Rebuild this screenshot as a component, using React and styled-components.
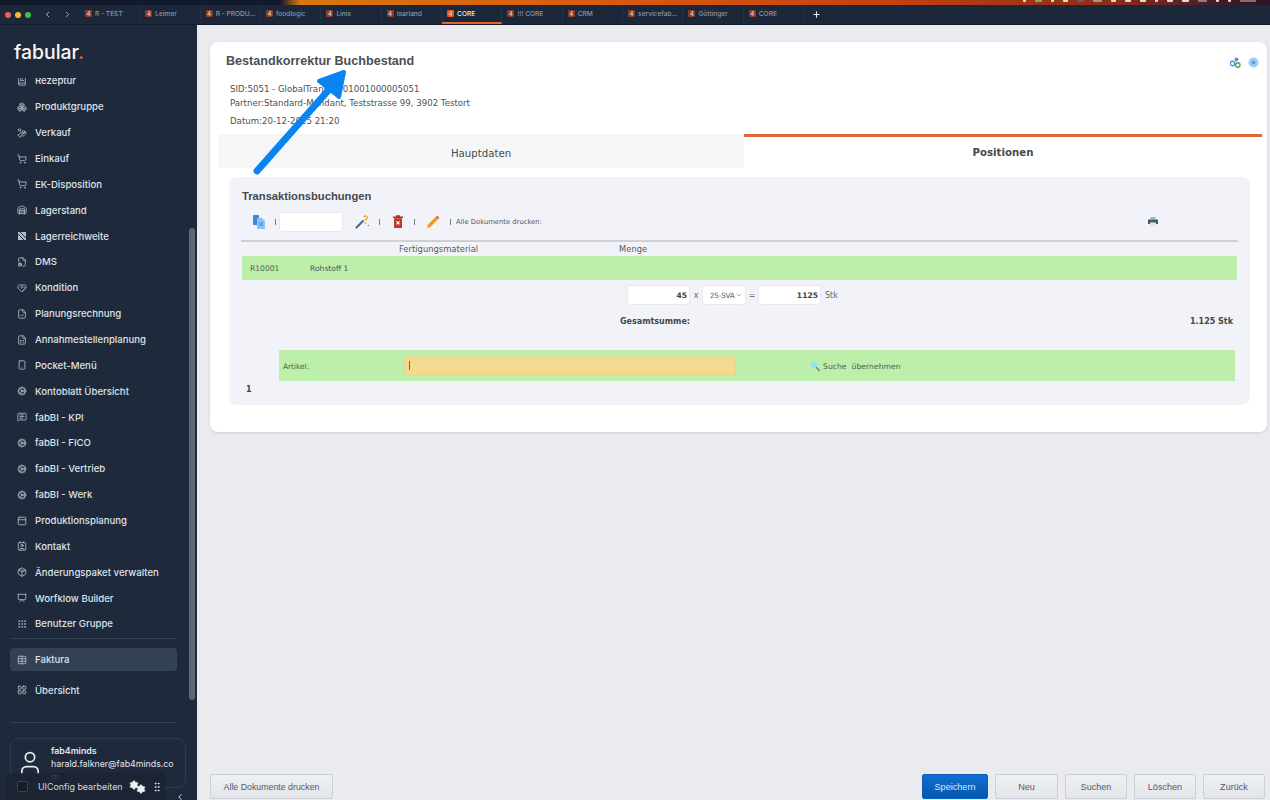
import styled, { createGlobalStyle } from "styled-components";
import {
  BookText, Boxes, HandCoins, ShoppingCart, Warehouse, FileCog, HeartHandshake,
  FileCheck, FileSpreadsheet, Smartphone, Cog, MessageSquareText, PanelTop, Contact,
  Package, Presentation, Grip, Table, LayoutGrid, User, ChevronLeft, ChevronRight, ChevronDown,
  Settings, GripVertical, Plus,
} from "lucide-react";

const GlobalStyle = createGlobalStyle`
  html, body {
    margin: 0;
    padding: 0;
    background: #e9ebef;
  }
  * {
    box-sizing: border-box;
  }
`;

const Page = styled.div`
  position: relative;
  width: 1270px;
  height: 800px;
  overflow: hidden;
  display: flex;
  flex-direction: column;
  font-family: "DejaVu Sans", sans-serif;
`;

const MenuBar = styled.div`
  height: 5px;
  flex: none;
  display: flex;
  justify-content: flex-end;
  gap: 9px;
  padding-right: 14px;
  background: linear-gradient(90deg, #101a2c 0, #101a2c 280px, #d8760f 300px, #d9590f 620px, #c2410f 900px, #8a2b18 1120px, #3a1a2b 1230px, #2a1626 1270px);
`;

const MenuGlyph = styled.span`
  width: ${({ $w }) => $w || 4}px;
  height: 2px;
  background: ${({ $c }) => $c || "#e6d8d4"};
  border-radius: 0 0 1px 1px;
`;

const TabBar = styled.div`
  height: 20px;
  flex: none;
  display: flex;
  align-items: center;
  background: #1c2839;
  border-bottom: 1px solid #111a28;
`;

const WindowControls = styled.div`
  width: 80px;
  flex: none;
  display: flex;
  align-items: center;
  padding-left: 5px;
  gap: 4px;
  color: #c5cbd4;
`;

const Light = styled.span`
  width: 6px;
  height: 6px;
  border-radius: 50%;
  background: ${({ $c }) => $c};
`;

const NavArrows = styled.div`
  display: flex;
  gap: 11px;
  margin-left: 8px;
`;

const Tab = styled.div`
  width: 60.35px;
  height: 19px;
  flex: none;
  display: flex;
  align-items: center;
  gap: 3px;
  padding-left: 5px;
  font: 500 6.6px Inter, sans-serif;
  color: ${({ $active }) => ($active ? "#e4e8ee" : "#8d96a3")};
  border-right: 1px solid #253245;
  border-bottom: 2px solid ${({ $active }) => ($active ? "#e8622c" : "transparent")};
`;

const TabIcon = styled.span`
  width: 7px;
  height: 7px;
  border-radius: 1px;
  display: grid;
  place-items: center;
  font: 700 5.5px Inter, sans-serif;
  color: #d8c0b6;
  background: ${({ $active }) => ($active ? "#ea5a1c" : "#8a3a2a")};
`;

const NewTab = styled.div`
  margin-left: 7.5px;
  display: flex;
  color: #e4e8ee;
`;

const Body = styled.div`
  flex: 1;
  min-height: 0;
  display: flex;
`;

const Sidebar = styled.aside`
  position: relative;
  width: 197px;
  flex: none;
  display: flex;
  flex-direction: column;
  background: #1e293b;
  font-family: Inter, sans-serif;
`;

const Logo = styled.div`
  height: 53px;
  flex: none;
  padding: 13px 0 0 14px;
  font: 500 19.4px/28px Inter, sans-serif;
  color: #f6f7f8;
  span {
    color: #e8622c;
  }
`;

const Nav = styled.nav`
  height: 558px;
  flex: none;
  overflow: hidden;
`;

const NavList = styled.div`
  margin-top: -10px;
`;

const NavItem = styled.div`
  height: ${({ $h }) => $h || 25.86}px;
  width: 167px;
  margin: ${({ $mt }) => $mt || 0}px 0 0 10px;
  padding-left: 7px;
  display: flex;
  align-items: center;
  gap: 8px;
  font-size: 9.6px;
  font-weight: 500;
  color: #dfe3ea;
  border-radius: 4px;
  background: ${({ $active }) => ($active ? "#334155" : "transparent")};
  svg {
    flex: none;
    color: #b4bcc8;
  }
`;

const Divider = styled.div`
  width: 167px;
  height: 1px;
  margin: ${({ $m }) => $m};
  background: #334155;
`;

const UserCard = styled.div`
  width: 176px;
  height: 50px;
  margin: 15px 0 0 10px;
  padding: 5px 0 0 5px;
  display: flex;
  gap: 7px;
  border: 1px solid #2e3a4d;
  border-radius: 8px;
  overflow: hidden;
  color: #e2e6ec;
  font-size: 8.8px;
  line-height: 13px;
  svg {
    flex: none;
    margin-top: 5px;
    color: #e8ebef;
  }
`;

const UserText = styled.div`
  width: 124px;
  word-break: break-all;
  strong {
    display: block;
    font-weight: 600;
  }
  span {
    display: block;
  }
`;

const ScrollThumb = styled.div`
  position: absolute;
  left: 189px;
  top: 203px;
  width: 6px;
  height: 472px;
  border-radius: 3px;
  background: #5d6675;
`;

const ConfigBar = styled.div`
  position: absolute;
  left: 5px;
  bottom: 0;
  width: 160px;
  height: 27px;
  display: flex;
  align-items: center;
  padding-left: 12px;
  border-radius: 4px 4px 0 0;
  background: rgba(28, 35, 49, 0.86);
  color: #d5d9df;
  font-size: 8.9px;
`;

const ConfigCheck = styled.span`
  width: 11px;
  height: 11px;
  flex: none;
  margin-right: 10px;
  border: 1px solid #3a4250;
  border-radius: 2px;
  background: #171c27;
`;

const ConfigLabel = styled.span`
  white-space: nowrap;
`;

const GearPair = styled.span`
  position: relative;
  width: 17px;
  height: 14px;
  flex: none;
  margin-left: 6px;
  color: #eef0f3;
  svg {
    position: absolute;
  }
  svg:first-child {
    left: 0;
    top: 0;
  }
  svg:last-child {
    right: 0;
    bottom: 0;
  }
`;

const ConfigGrip = styled(GripVertical)`
  flex: none;
  margin-left: 5px;
`;

const CollapseHandle = styled.span`
  position: absolute;
  left: 175px;
  bottom: -6px;
  color: #cfd4db;
`;

const Main = styled.main`
  flex: 1;
  min-width: 0;
  display: flex;
  flex-direction: column;
  padding: 17px 3px 0 13px;
  background: #e9ebef;
`;

const Card = styled.section`
  height: 390px;
  flex: none;
  padding: 10px 5px 0 8px;
  border-radius: 8px;
  background: #fff;
  box-shadow: 0 1px 3px rgba(40, 50, 70, 0.14);
`;

const CardHead = styled.div`
  display: flex;
  justify-content: space-between;
  padding-left: 8px;
`;

const Title = styled.h1`
  margin: 0;
  font: 700 12.6px/18px "Liberation Sans", sans-serif;
  color: #4a4f55;
`;

const HeadIcons = styled.div`
  display: flex;
  gap: 7px;
  padding: 5px 3px 0 0;
`;

const Meta = styled.div`
  margin: 11.5px 0 0 12px;
  font-size: 8.6px;
  color: #4b5056;
  p {
    margin: 0;
    height: 14px;
    line-height: 14px;
  }
  p:last-child {
    margin-top: 4px;
  }
`;

const TabRow = styled.div`
  display: flex;
  margin-top: 6.5px;
  height: 34px;
`;

const PanelTab = styled.div`
  flex: ${({ $grow }) => $grow} 0 0;
  display: flex;
  justify-content: center;
  align-items: ${({ $active }) => ($active ? "flex-start" : "center")};
  padding-top: ${({ $active }) => ($active ? "10px" : "6px")};
  font-size: 10.2px;
  line-height: 12px;
  font-weight: ${({ $active }) => ($active ? 700 : 400)};
  color: #444a50;
  background: ${({ $active }) => ($active ? "#fff" : "#f5f6f8")};
  border-top: ${({ $active }) => ($active ? "3px solid #e0673a" : "0")};
`;

const Panel = styled.div`
  height: 228px;
  margin: 9px 12px 0 11px;
  padding: 12px 12px 0 12px;
  border-radius: 8px;
  background: #f2f3f8;
`;

const PanelTitle = styled.h2`
  margin: 0;
  padding-left: 1px;
  font: 700 11.2px/15px "Liberation Sans", sans-serif;
  color: #44494f;
`;

const Toolbar = styled.div`
  height: 27px;
  margin-top: 4px;
  display: flex;
  align-items: center;
  padding-left: 11px;
  font-size: 6.8px;
  color: #50565c;
`;

const ToolSep = styled.span`
  width: 1px;
  height: 6px;
  flex: none;
  margin: ${({ $m }) => $m};
  background: #777c82;
`;

const ToolGap = styled.span`
  width: 12px;
  flex: none;
`;

const Field = styled.div`
  width: ${({ $w }) => $w}px;
  height: 20px;
  flex: none;
  display: flex;
  align-items: center;
  justify-content: flex-end;
  padding-right: 2px;
  border: 1px solid #e8e9ee;
  border-radius: 3px;
  background: #fff;
  font-size: 7.6px;
  font-weight: 700;
  color: #3d4248;
`;

const PrintSpot = styled.span`
  margin-left: auto;
  margin-right: 80px;
  display: flex;
`;

const Rule = styled.div`
  height: 2px;
  margin-top: 5px;
  background: #cfd0d4;
`;

const ColumnHead = styled.div`
  height: 14px;
  display: grid;
  grid-template-columns: 158px 220px 1fr;
  align-items: center;
  font-size: 8.4px;
  color: #55595f;
`;

const GreenRow = styled.div`
  height: ${({ $h }) => $h}px;
  display: flex;
  align-items: center;
  background: #bcefa9;
  color: #53595a;
  font-size: 7.6px;
`;

const ItemRow = styled(GreenRow)`
  margin: 0 1px;
`;

const ItemNo = styled.span`
  width: 68px;
  padding-left: 8px;
`;

const QtyRow = styled.div`
  height: 20px;
  margin-top: 5px;
  display: flex;
  align-items: center;
  padding-left: 386px;
  font-size: 8px;
  color: #656a70;
`;

const Op = styled.span`
  width: 12px;
  text-align: center;
`;

const UnitSelect = styled(Field)`
  justify-content: space-between;
  padding: 0 2px 0 7px;
  font-weight: 400;
  font-size: 7.2px;
  letter-spacing: -0.2px;
  white-space: nowrap;
  color: #595e64;
  svg {
    flex: none;
    color: #777;
  }
`;

const Unit = styled.span`
  margin-left: 4px;
`;

const TotalRow = styled.div`
  height: 14px;
  margin-top: 9px;
  display: flex;
  justify-content: space-between;
  align-items: center;
  padding: 0 5px 0 379px;
  font-size: 8px;
  font-weight: 700;
  color: #43484e;
`;

const EntryRow = styled(GreenRow)`
  margin: 22px 3px 0 38px;
  padding-left: 4px;
`;

const EntryLabel = styled.span`
  width: 121px;
  padding-top: 1px;
  font-size: 7.4px;
`;

const EntryInput = styled.div`
  width: 332px;
  height: 20px;
  flex: none;
  display: flex;
  align-items: center;
  padding-left: 4px;
  border: 1px solid #e3d59b;
  border-radius: 2px;
  background: #f3da91;
  i {
    width: 1px;
    height: 9px;
    background: #77684a;
  }
`;

const EntryActions = styled.div`
  margin-left: 74px;
  padding-top: 1px;
  display: flex;
  align-items: center;
  font-size: 7.7px;
  svg {
    margin-right: 3px;
  }
  span + span {
    margin-left: 5px;
  }
`;

const PageNo = styled.div`
  margin: 3px 0 0 5px;
  font-size: 8px;
  line-height: 11px;
  font-weight: 700;
  color: #3d4248;
`;

const Footer = styled.footer`
  margin-top: auto;
  height: 26px;
  padding-right: 2px;
  display: flex;
  align-items: flex-start;
  gap: 7px;
`;

const Button = styled.button`
  width: ${({ $w }) => $w}px;
  height: 25px;
  flex: none;
  padding: 0;
  font: 400 9.1px "Liberation Sans", sans-serif;
  border-radius: 2px;
  border: 1px solid ${({ $primary }) => ($primary ? "#0b62bd" : "#cbd0d7")};
  color: ${({ $primary }) => ($primary ? "#dbe9f8" : "#555b62")};
  background: ${({ $primary }) =>
    $primary ? "linear-gradient(#0f6fd2, #0457ad)" : "linear-gradient(#eff0f3, #e3e5e9)"};
`;

const PrintAllButton = styled(Button)`
  font-size: 8.8px;
`;

const FooterSpacer = styled.div`
  flex: 1;
`;

const Annotation = styled.svg`
  position: absolute;
  left: 0;
  top: 0;
  pointer-events: none;
`;

const tabs = ["R - TEST", "Leimer", "R - PRODU...", "foodlogic", "Linis", "Isarland", "CORE", "!!! CORE", "CRM", "servicefab...", "Göttinger", "CORE"];

function ReachIcon({ size }) {
  return (
    <svg width={size} height={size} viewBox="0 0 10 10">
      <path d="M1 1h8v8H1z" fill="#b4bcc8" />
      <path d="M1 3 7 9M3 1l6 6" stroke="#1e293b" strokeWidth="1" />
    </svg>
  );
}

const navItems = [
  ["Rezeptur", BookText], ["Produktgruppe", Boxes], ["Verkauf", HandCoins], ["Einkauf", ShoppingCart],
  ["EK-Disposition", ShoppingCart], ["Lagerstand", Warehouse], ["Lagerreichweite", ReachIcon], ["DMS", FileCog],
  ["Kondition", HeartHandshake], ["Planungsrechnung", FileCheck], ["Annahmestellenplanung", FileSpreadsheet],
  ["Pocket-Menü", Smartphone], ["Kontoblatt Übersicht", Cog], ["fabBI - KPI", MessageSquareText],
  ["fabBI - FICO", Cog], ["fabBI - Vertrieb", Cog], ["fabBI - Werk", Cog],
  ["Produktionsplanung", PanelTop], ["Kontakt", Contact], ["Änderungspaket verwalten", Package],
  ["Worfklow Builder", Presentation], ["Benutzer Gruppe", Grip],
];

function ShareIcon() {
  return (
    <svg width="11" height="11" viewBox="0 0 11 11">
      <circle cx="6.5" cy="2.5" r="2" fill="#7d7fe0" />
      <circle cx="2.5" cy="6.5" r="2.2" fill="none" stroke="#3f97f0" strokeWidth="1.4" />
      <circle cx="7.8" cy="8" r="2.2" fill="none" stroke="#45b04a" strokeWidth="1.4" />
    </svg>
  );
}

function GlobeIcon() {
  return (
    <svg width="11" height="11" viewBox="0 0 11 11">
      <circle cx="5.5" cy="5.5" r="5" fill="#9ccdfb" />
      <circle cx="5.5" cy="5.5" r="2" fill="#5aa5f2" />
    </svg>
  );
}

function CopyDocIcon() {
  return (
    <svg width="14" height="15" viewBox="0 0 14 15">
      <path d="M1 1h6v10H1z" fill="#3a8bdc" />
      <path d="M5 4h5l3 3v8H5z" fill="#8cc3f2" />
      <path d="M7 9h4M7 11h4" stroke="#3a8bdc" strokeWidth="1" />
    </svg>
  );
}

function WandIcon() {
  return (
    <svg width="15" height="15" viewBox="0 0 15 15">
      <path d="M1.5 13.5 8 7" stroke="#46657e" strokeWidth="2" strokeLinecap="round" />
      <path d="M8.5 3.2C9 1.4 12.3 1.5 12.3 3.5c0 1.6-2 1.6-2 3.2" fill="none" stroke="#eeb02e" strokeWidth="1.5" />
      <circle cx="10.5" cy="9" r="0.9" fill="#eeb02e" />
      <circle cx="13.4" cy="11.6" r="0.8" fill="#ea7a2c" />
    </svg>
  );
}

function TrashIcon() {
  return (
    <svg width="10" height="13" viewBox="0 0 10 13">
      <path d="M0 1.5h10v1.6H0zM3 .3h4v1.4H3z" fill="#a8352c" />
      <path d="M1 3.2h8V13H1z" fill="#c2372e" />
      <path d="M3.5 6.4l3 3M6.5 6.4l-3 3" stroke="#fff" strokeWidth="1.2" />
    </svg>
  );
}

function PencilIcon() {
  return (
    <svg width="14" height="14" viewBox="0 0 14 14">
      <path d="M1 13 2 9.5 10.5 1.2 12.8 3.4 4.3 12z" fill="#f29a26" />
      <path d="M10.5 1.2 12.8 3.4" stroke="#d76a35" strokeWidth="1.6" />
    </svg>
  );
}

function PrintIcon() {
  return (
    <svg width="10" height="9" viewBox="0 0 10 9">
      <path d="M2.5 0h5v2.5h-5z" fill="#9eb4c4" />
      <path d="M0 2.5h10V7H0z" fill="#44596b" />
      <path d="M2 5.5h6V9H2z" fill="#dfe6ea" />
    </svg>
  );
}

function LensIcon() {
  return (
    <svg width="10" height="10" viewBox="0 0 10 10">
      <circle cx="4" cy="4" r="3.4" fill="#8fe4f4" />
      <path d="M6.5 6.5 9.4 9.4" stroke="#4a8fb8" strokeWidth="1.4" strokeLinecap="round" />
    </svg>
  );
}

export default function App() {
  return (
    <Page>
      <GlobalStyle />
      <MenuBar>
        <MenuGlyph $w={3} />
        <MenuGlyph $w={7} $c="#7fb04a" />
        <MenuGlyph $w={3} />
        <MenuGlyph $w={5} />
        <MenuGlyph $w={7} $c="#6a5f60" />
        <MenuGlyph $w={9} $c="#a8938f" />
        <MenuGlyph $w={5} />
        <MenuGlyph $w={6} />
        <MenuGlyph $w={6} />
        <MenuGlyph $w={3} />
        <MenuGlyph $w={6} />
        <MenuGlyph $w={7} />
        <MenuGlyph $w={9} $c="#8d7f85" />
        <MenuGlyph $w={3} />
        <MenuGlyph $w={3} />
        <MenuGlyph $w={16} $c="#8e6d70" />
      </MenuBar>
      <TabBar>
        <WindowControls>
          <Light $c="#ee5f57" />
          <Light $c="#f4bd30" />
          <Light $c="#39c548" />
          <NavArrows>
            <ChevronLeft size={9} strokeWidth={2.4} />
            <ChevronRight size={9} strokeWidth={2} />
          </NavArrows>
        </WindowControls>
        {tabs.map((name, i) => (
          <Tab key={i} $active={i === 6}>
            <TabIcon $active={i === 6}>4</TabIcon>
            {name}
          </Tab>
        ))}
        <NewTab>
          <Plus size={9} strokeWidth={3} />
        </NewTab>
      </TabBar>
      <Body>
        <Sidebar>
          <Logo>fabular<span>.</span></Logo>
          <Nav>
            <NavList>
              {navItems.map(([label, Icon]) => (
                <NavItem key={label}>
                  <Icon size={10} />
                  {label}
                </NavItem>
              ))}
            </NavList>
          </Nav>
          <Divider $m="2px 0 0 10px" />
          <NavItem $active $h={23} $mt={9}>
            <Table size={10} />
            Faktura
          </NavItem>
          <NavItem $h={26} $mt={6}>
            <LayoutGrid size={10} />
            Übersicht
          </NavItem>
          <Divider $m="19px 0 0 10px" />
          <UserCard>
            <User size={28} strokeWidth={1.5} />
            <UserText>
              <strong>fab4minds</strong>
              <span>harald.falkner@fab4minds.com</span>
            </UserText>
          </UserCard>
          <ScrollThumb />
          <CollapseHandle>
            <ChevronLeft size={10} strokeWidth={2.4} />
          </CollapseHandle>
          <ConfigBar>
            <ConfigCheck />
            <ConfigLabel>UIConfig bearbeiten</ConfigLabel>
            <GearPair>
              <Settings size={10} fill="currentColor" />
              <Settings size={10} fill="currentColor" />
            </GearPair>
            <ConfigGrip size={12} />
          </ConfigBar>
        </Sidebar>
        <Main>
          <Card>
            <CardHead>
              <Title>Bestandkorrektur Buchbestand</Title>
              <HeadIcons>
                <ShareIcon />
                <GlobeIcon />
              </HeadIcons>
            </CardHead>
            <Meta>
              <p>SID:5051 - GlobalTransID: 01001000005051</p>
              <p>Partner:Standard-Mandant, Teststrasse 99, 3902 Testort</p>
              <p>Datum:20-12-2025 21:20</p>
            </Meta>
            <TabRow>
              <PanelTab $grow={526}>Hauptdaten</PanelTab>
              <PanelTab $grow={518} $active>Positionen</PanelTab>
            </TabRow>
            <Panel>
              <PanelTitle>Transaktionsbuchungen</PanelTitle>
              <Toolbar>
                <CopyDocIcon />
                <ToolSep $m="0 3px 0 9px" />
                <Field $w={64} />
                <ToolGap />
                <WandIcon />
                <ToolSep $m="0 13px 0 9px" />
                <TrashIcon />
                <ToolSep $m="0 11px" />
                <PencilIcon />
                <ToolSep $m="0 5px 0 10px" />
                Alle Dokumente drucken:
                <PrintSpot><PrintIcon /></PrintSpot>
              </Toolbar>
              <Rule />
              <ColumnHead>
                <span />
                <span>Fertigungsmaterial</span>
                <span>Menge</span>
              </ColumnHead>
              <ItemRow $h={24}>
                <ItemNo>R10001</ItemNo>
                <span>Rohstoff 1</span>
              </ItemRow>
              <QtyRow>
                <Field $w={63}>45</Field>
                <Op>x</Op>
                <UnitSelect $w={44}>25-SVA<ChevronDown size={8} /></UnitSelect>
                <Op>=</Op>
                <Field $w={63}>1125</Field>
                <Unit>Stk</Unit>
              </QtyRow>
              <TotalRow>
                <span>Gesamtsumme:</span>
                <span>1.125 Stk</span>
              </TotalRow>
              <EntryRow $h={31}>
                <EntryLabel>Artikel:</EntryLabel>
                <EntryInput><i /></EntryInput>
                <EntryActions>
                  <LensIcon />
                  <span>Suche</span>
                  <span>übernehmen</span>
                </EntryActions>
              </EntryRow>
              <PageNo>1</PageNo>
            </Panel>
          </Card>
          <Footer>
            <PrintAllButton $w={123}>Alle Dokumente drucken</PrintAllButton>
            <FooterSpacer />
            <Button $primary $w={66}>Speichern</Button>
            <Button $w={63}>Neu</Button>
            <Button $w={62}>Suchen</Button>
            <Button $w={62}>Löschen</Button>
            <Button $w={62}>Zurück</Button>
          </Footer>
        </Main>
      </Body>
      <Annotation width="1270" height="800" viewBox="0 0 1270 800">
        <path d="M257 171 333 85" stroke="#0a84f0" strokeWidth="7" strokeLinecap="round" />
        <path d="M344 72 319 81 339 97z" fill="#0a84f0" stroke="#0a84f0" strokeWidth="4" strokeLinejoin="round" />
      </Annotation>
    </Page>
  );
}
